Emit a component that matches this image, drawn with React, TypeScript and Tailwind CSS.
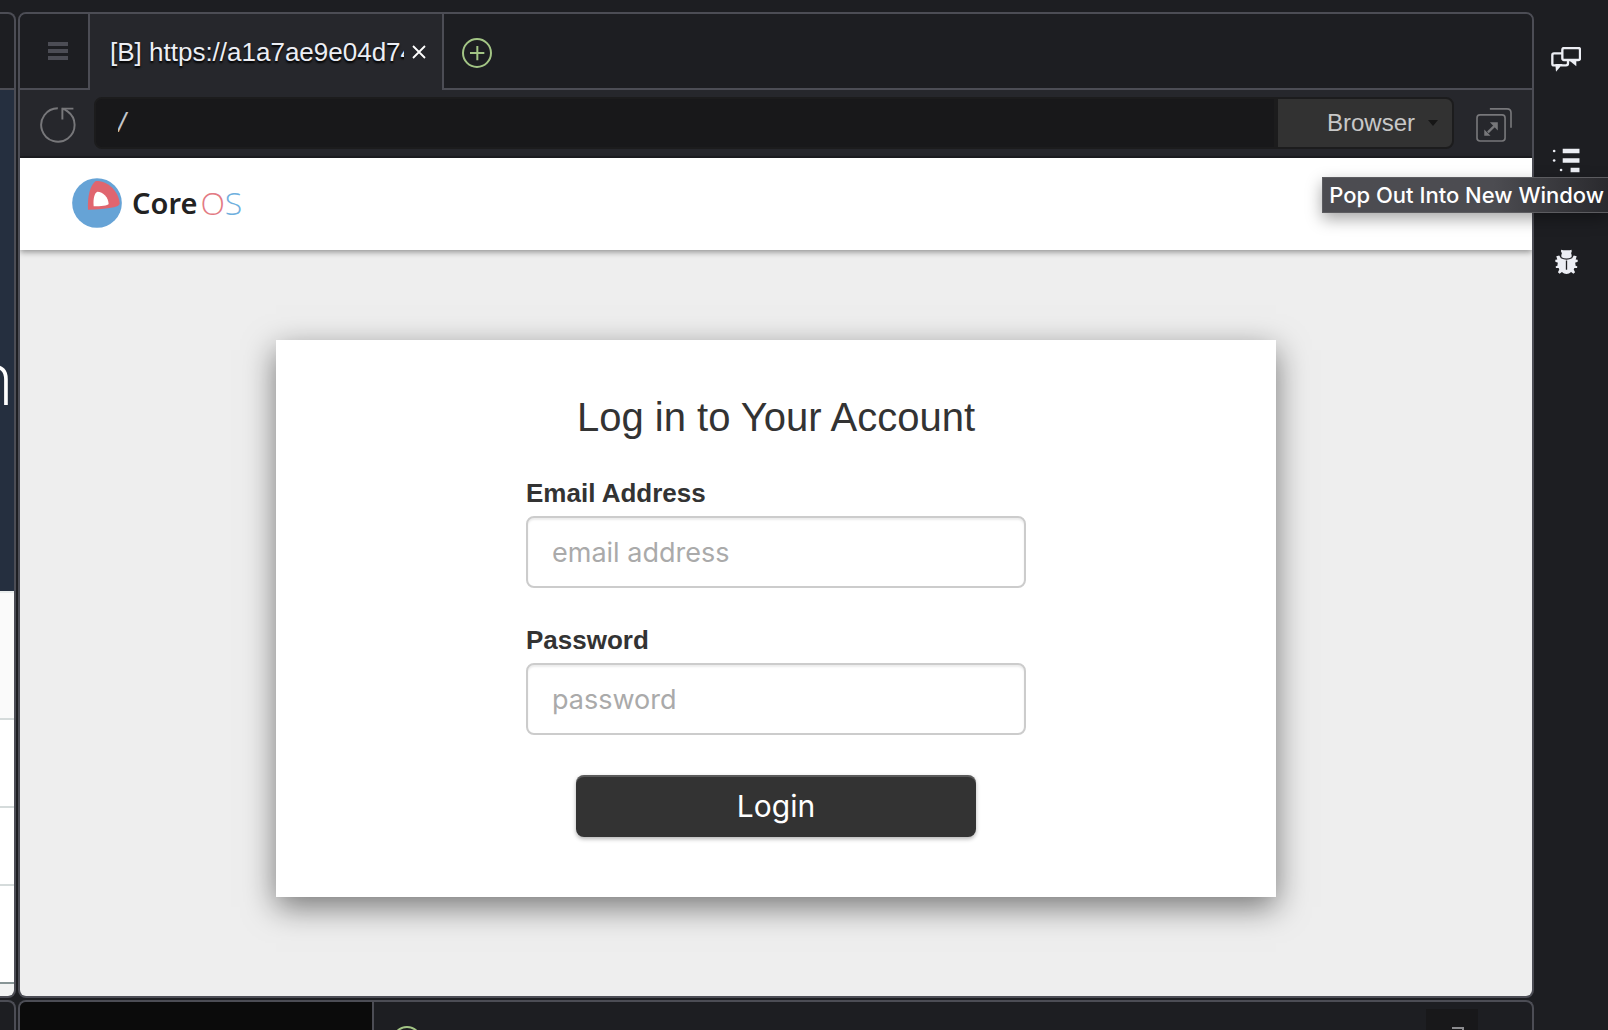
import React from "react";

function PlusCircle() {
  return (
    <svg viewBox="1386 114 90 90" className="size-[30px]" fill="none" stroke="#a3c585" strokeWidth="6" aria-hidden="true">
      <circle cx="1431" cy="159" r="42" />
      <path d="M1432 138v43M1410 159h43" />
    </svg>
  );
}

function ReloadIcon() {
  return (
    <svg viewBox="119 323 111 110" className="h-9 w-9" fill="none" stroke="#77777a" strokeWidth="6" aria-hidden="true">
      <path d="M174 326.500A51.500 51.500 0 1 0 204 336C199 332 193 329 188 328" />
      <path d="M222 327.500H188V361" />
    </svg>
  );
}

function PopOutIcon() {
  return (
    <svg viewBox="708 324 109 103" className="h-[34px] w-9" fill="none" stroke="#77777a" strokeWidth="5" aria-hidden="true">
      <rect x="711" y="345" width="85" height="79" rx="9" />
      <path d="M750 326.500h52q12 0 12 12V384" />
      <path d="M744 398l20-20" strokeWidth="7" />
      <path d="M750 367h24v25zM733 389v19h19z" fill="#77777a" stroke="none" />
    </svg>
  );
}

function ChatIcon() {
  return (
    <svg viewBox="933 141 90 75" className="h-[25px] w-[30px]" fill="none" stroke="#eceef4" strokeWidth="7" aria-hidden="true">
      <path d="M966 160H942q-5 0-5 5v26q0 5 5 5h9M962 196h16q6 0 6-6v-7" />
      <path d="M946 192h22L948 215z" fill="#eceef4" stroke="none" />
      <rect x="967" y="144" width="53" height="36" rx="5" />
      <path d="M986 180h23v19z" fill="#eceef4" stroke="none" />
    </svg>
  );
}

function ListIcon() {
  return (
    <svg viewBox="940 443 84 76" className="h-[25px] w-7" fill="#eceef4" aria-hidden="true">
      <path d="M972 445h51v14h-51zM972 474h51v14h-51zM996 503h27v14h-27z" />
      <circle cx="946" cy="452" r="4" />
      <circle cx="946" cy="481" r="4" />
      <circle cx="967" cy="510" r="4" />
    </svg>
  );
}

function BugIcon() {
  return (
    <svg viewBox="947 747 68 76" className="h-[25px] w-[23px]" fill="#eceef4" aria-hidden="true">
      <path d="M965 749l6 2h20l5-2 1 5-2 6q3 6 1 12-6 4-15 4t-15-4q-2-6 1-12l-3-6z" />
      <path d="M964 775q17 9 34 0l5-8 9 2-3 10 6 1v6l-8 3q2 4 1 8l6 3-1 5-8 0-2 4 4 9-5 4-7-5q-6 6-14 6t-14-6l-7 5-5-4 4-9-2-4-8 0-1-5 6-3q-1-4 1-8l-8-3v-6l6-1-3-10 9-2z" />
      <path d="M981 782v28" stroke="#1d1e22" strokeWidth="4" />
    </svg>
  );
}

function Logo() {
  return (
    <a href="#" aria-label="CoreOS" className="flex items-center pb-0.5">
      <svg viewBox="64 54 150 150" className="size-[50px]" aria-hidden="true">
        <circle cx="139" cy="129" r="74.500" fill="#66a3d6" />
        <path d="M135 63C170 61 204 92 207 130 207 136 200 140 190 142 165 147 140 149 112 149 110 110 118 76 135 63z" fill="#e0656f" />
        <path d="M140 95C158 95 173 112 174 132 172 137 150 139 129 139 127 115 131 100 140 95z" fill="#fff" />
      </svg>
      <span className="ml-[10px] font-['Noto_Sans'] text-[29px] leading-[50px] font-semibold text-[#222]">Core</span>
      <span className="ml-[3px] font-['Open_Sans'] text-[32px] leading-[50px] font-light text-[#e37a83]">
        O<span className="text-[#6fb0de]">S</span>
      </span>
    </a>
  );
}

function LeftPane() {
  return (
    <section className="flex w-4 shrink-0 flex-col overflow-hidden rounded-r-lg border-y-2 border-r-2 border-[#4c4d55] bg-[#1d1e22]">
      <div className="h-19 shrink-0 border-b-2 border-[#4c4d55]" />
      <div className="flex h-[501px] shrink-0 justify-end bg-[#252f3f] pt-[242px]">
        <span className="font-['Open_Sans'] text-[74px] leading-[90px] font-light text-white">n</span>
      </div>
      <div className="h-[129px] shrink-0 border-t-2 border-b-2 border-t-[#eaeded] border-b-[#d5dbdb] bg-[#fafafa]" />
      <div className="h-[88px] shrink-0 border-b-2 border-[#d5dbdb] bg-white" />
      <div className="h-[78px] shrink-0 border-b-2 border-[#d5dbdb] bg-white" />
      <div className="h-[98px] shrink-0 border-b-2 border-[#879596] bg-white" />
      <div className="flex-1 bg-[#f2f3f3]" />
    </section>
  );
}

function Field({ id, label, type, placeholder }: { id: string; label: string; type: string; placeholder: string }) {
  return (
    <div className="flex flex-col">
      <label htmlFor={id} className="h-10 text-[26px] leading-[34px] font-bold">{label}</label>
      <input
        id={id}
        type={type}
        placeholder={placeholder}
        className="h-18 w-full rounded-lg border-2 border-[#ccc] bg-white px-6 font-[Inter] text-[27px] text-[#333] shadow-[inset_0_2px_2px_rgba(0,0,0,0.08)] placeholder:text-[#aaa]"
      />
    </div>
  );
}

function LoginCard() {
  return (
    <form className="mx-auto w-full max-w-[1000px] bg-white pt-[52px] pb-15 text-[#333] shadow-[0_10px_30px_rgba(0,0,0,0.5)]">
      <h1 className="text-center text-[40px] leading-[50px]">Log in to Your Account</h1>
      <div className="mx-auto mt-[34px] flex w-1/2 flex-col gap-[35px]">
        <Field id="email" label="Email Address" type="email" placeholder="email address" />
        <Field id="password" label="Password" type="password" placeholder="password" />
      </div>
      <button
        type="button"
        className="mx-auto mt-10 block h-[62px] w-2/5 rounded-lg bg-[#333] font-[Inter] text-[30px] text-white shadow-[inset_0_2px_0_rgba(255,255,255,0.2),0_2px_4px_rgba(0,0,0,0.3)]"
      >
        Login
      </button>
    </form>
  );
}

function BrowserPane() {
  return (
    <section className="flex min-w-0 flex-1 flex-col overflow-hidden rounded-lg border-2 border-[#4c4d55] bg-[#26272c]">
      <div className="flex h-19 shrink-0">
        <button type="button" aria-label="Pane menu" className="flex w-[70px] flex-col items-center justify-center gap-[3px] border-r-2 border-b-2 border-[#4c4d55] bg-[#1d1e22] pl-2">
          <span className="h-1 w-5 bg-[#4c4d55]" />
          <span className="h-1 w-5 bg-[#4c4d55]" />
          <span className="h-1 w-5 bg-[#4c4d55]" />
        </button>
        <div className="flex w-[352px] items-center pr-4 pl-5">
          <span className="w-[294px] shrink-0 overflow-hidden text-[26px] leading-9 whitespace-nowrap text-[#eceef4] [text-shadow:0_2px_2px_#000]">
            [B] https://a1a7ae9e04d74
          </span>
          <button type="button" aria-label="Close tab" className="ml-2">
            <svg viewBox="0 0 14 14" className="size-[14px]" stroke="#fff" strokeWidth="1.800" aria-hidden="true">
              <path d="M1 1l12 12M13 1L1 13" />
            </svg>
          </button>
        </div>
        <div className="flex flex-1 items-center border-b-2 border-l-2 border-[#4c4d55] bg-[#1d1e22] pl-[18px] pt-1">
          <button type="button" aria-label="New tab"><PlusCircle /></button>
        </div>
      </div>
      <div className="flex h-17 shrink-0 items-center border-b-2 border-[#1d1e22] pr-5 pl-5">
        <button type="button" aria-label="Reload" className="pt-1"><ReloadIcon /></button>
        <input
          aria-label="Address"
          defaultValue="/"
          className="ml-[18px] h-[52px] min-w-0 flex-1 rounded-l-lg border-2 border-[#1c1c1d] bg-[#18181a] px-[22px] text-[28px] text-[#c4c5ca] italic"
        />
        <select
          aria-label="View mode"
          className="h-[52px] w-[178px] appearance-none rounded-r-lg border-2 border-[#1c1c1d] bg-[#323232] pl-[49px] text-[24px] text-[#c8c8c8]"
        >
          <option>Browser</option>
        </select>
        <svg viewBox="0 0 10 6" className="-ml-[26px] h-[6px] w-[10px]" fill="#161616" aria-hidden="true">
          <path d="M0 0h10L5 6z" />
        </svg>
        <button type="button" aria-label="Pop out" aria-describedby="popout-tip" className="ml-[38px] pt-1"><PopOutIcon /></button>
      </div>
      <div className="flex min-h-0 flex-1 flex-col bg-[#eee]">
        <header className="relative flex h-[92px] shrink-0 items-center bg-white px-13 shadow-[0_2px_6px_rgba(0,0,0,0.4)]">
          <Logo />
        </header>
        <main className="px-8 pt-[90px]">
          <LoginCard />
        </main>
      </div>
    </section>
  );
}

function BottomPane() {
  return (
    <section className="flex min-w-0 flex-1 rounded-t-lg border-x-2 border-t-2 border-[#4c4d55] bg-[#1d1e22]">
      <div className="w-[354px] shrink-0 rounded-tl-md border-r-2 border-[#4c4d55] bg-[#0b0b0b]" />
      <div className="flex h-[76px] flex-1 items-start justify-between pt-[7px] pr-[54px] pl-[18px]">
        <button type="button" aria-label="New terminal" className="pt-[17px]"><PlusCircle /></button>
        <button type="button" aria-label="Expand" className="flex h-[52px] w-[52px] justify-end bg-[#18181a] pt-[18px] pr-[14px]">
          <svg viewBox="0 0 12 12" className="size-3" fill="none" stroke="#8b8b8e" strokeWidth="2" aria-hidden="true">
            <path d="M0 1h11v11" />
          </svg>
        </button>
      </div>
    </section>
  );
}

export default function App() {
  return (
    <div className="relative flex h-screen overflow-hidden bg-[#1d1e22] font-['Liberation_Sans',sans-serif]">
      <div className="flex min-w-0 flex-1 flex-col gap-0.5 pt-3">
        <div className="flex min-h-0 flex-1 gap-0.5">
          <LeftPane />
          <BrowserPane />
        </div>
        <div className="flex h-[30px] shrink-0 gap-0.5 overflow-hidden">
          <section className="w-4 shrink-0 rounded-tr-lg border-t-2 border-r-2 border-[#4c4d55]" />
          <BottomPane />
        </div>
      </div>
      <nav aria-label="Tools" className="flex w-[74px] shrink-0 flex-col items-center gap-[76px] pt-[47px] pr-[10px]">
        <button type="button" aria-label="Chat"><ChatIcon /></button>
        <button type="button" aria-label="Outline"><ListIcon /></button>
        <button type="button" aria-label="Debugger"><BugIcon /></button>
      </nav>
      <div
        id="popout-tip"
        role="tooltip"
        className="absolute top-[177px] right-0 z-20 border-y border-l border-[#5c5c60] bg-linear-to-r from-[#4c4c51] from-60% to-[#2a2a2e] pr-1 pl-[6px] font-[Inter] text-[22px] leading-[34px] font-medium whitespace-nowrap text-white shadow-[0_6px_16px_rgba(0,0,0,0.35)]"
      >
        Pop Out Into New Window
      </div>
    </div>
  );
}
